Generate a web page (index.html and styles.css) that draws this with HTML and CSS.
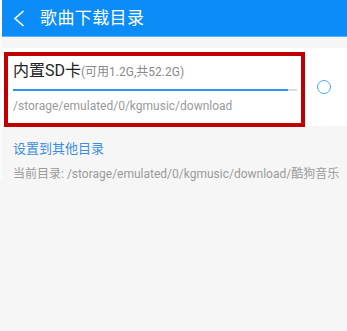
FILE: index.html
```html
<!DOCTYPE html>
<html lang="zh-CN">
<head>
    <meta charset="UTF-8">
    <meta name="viewport" content="width=device-width, initial-scale=1.0">
    <title>歌曲下载目录</title>
    <link rel="stylesheet" href="styles.css">
</head>
<body>
    <div class="header">
        <svg class="back" width="12" height="17" viewBox="0 0 12 17">
            <path d="M10.5 1 L2 8.5 L10.5 16" fill="none" stroke="#fff" stroke-width="1.6"/>
        </svg>
        <span class="title">歌曲下载目录</span>
    </div>

    <div class="card">
        <div class="storage">
            <div class="name">内置SD卡<span class="size">(可用1.2G,共52.2G)</span></div>
            <div class="bar"><div class="used" style="width: 96.7%"></div></div>
            <div class="path">/storage/emulated/0/kgmusic/download</div>
        </div>
        <div class="radio"></div>
        <!-- 标注框 -->
        <div class="mark"></div>
    </div>

    <div class="other">
        <div class="link">设置到其他目录</div>
        <div class="current">当前目录: /storage/emulated/0/kgmusic/download/酷狗音乐</div>
    </div>
</body>
</html>
```

FILE: styles.css
```css
body {
    margin: 0;
    background-color: #f6f6f6;
    font-family: Roboto, "Noto Sans CJK SC", sans-serif;
    border-left: 2px solid #fbfbfb;
}
.header {
    height: 36px;
    background-color: #0b8cf6;
    border-bottom: 1px solid #59b0f7;
    display: flex;
    align-items: center;
    margin-left: -2px;
}
.back {
    margin-left: 13px;
    margin-right: 15px;
    margin-top: 1px;
}
.title {
    color: #fff;
    font-size: 17px;
    letter-spacing: 0.4px;
    margin-top: -3px;
}
.card {
    position: relative;
    margin-top: 11px;
    height: 78px;
    background-color: #fff;
    display: flex;
    align-items: center;
}
.storage {
    width: 284px;
    margin-left: 11px;
}
.name {
    font-size: 16px;
    color: #222;
    line-height: 20px;
}
.size {
    font-size: 12px;
    color: #8a8a8a;
}
.bar {
    height: 2px;
    background-color: #dcdcdc;
    margin-top: 7px;
}
.used {
    height: 2px;
    background-color: #2c98ec;
}
.path {
    font-size: 12px;
    color: #9a9a9a;
    margin-top: 7px;
    line-height: 16px;
}
.radio {
    width: 12px;
    height: 12px;
    border: 1.6px solid #4aa7f2;
    border-radius: 50%;
    margin-left: 20px;
}
.mark {
    position: absolute;
    left: 2px;
    top: 4px;
    width: 293px;
    height: 67px;
    border: 4px solid #c00000;
}
.other {
    padding: 14px 0 0 11px;
}
.link {
    font-size: 13px;
    color: #3a8fdb;
    line-height: 18px;
}
.current {
    font-size: 12px;
    color: #9a9a9a;
    margin-top: 8px;
    line-height: 16px;
}
```
